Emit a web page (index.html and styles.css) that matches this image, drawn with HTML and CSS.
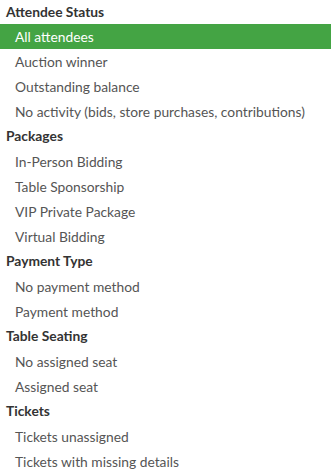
FILE: index.html
```html
<!DOCTYPE html>
<html>
<head>
    <meta charset="UTF-8">
    <title>Filters</title>
    <link rel="stylesheet" href="styles.css">
</head>
<body>
    <div class="filter-menu">
        <div class="group-title">Attendee Status</div>
        <div class="item active">All attendees</div>
        <div class="item">Auction winner</div>
        <div class="item">Outstanding balance</div>
        <div class="item">No activity (bids, store purchases, contributions)</div>

        <div class="group-title">Packages</div>
        <div class="item">In-Person Bidding</div>
        <div class="item">Table Sponsorship</div>
        <div class="item">VIP Private Package</div>
        <div class="item">Virtual Bidding</div>

        <div class="group-title">Payment Type</div>
        <div class="item">No payment method</div>
        <div class="item">Payment method</div>

        <div class="group-title">Table Seating</div>
        <div class="item">No assigned seat</div>
        <div class="item">Assigned seat</div>

        <div class="group-title">Tickets</div>
        <div class="item">Tickets unassigned</div>
        <div class="item">Tickets with missing details</div>
    </div>
</body>
</html>
```

FILE: styles.css
```css
body {
    margin: 0;
    background-color: #fff;
    font-family: "Lato", "Open Sans", sans-serif;
    font-size: 13.8px;
}

.filter-menu {
    width: 331px;
}

.group-title {
    height: 25px;
    line-height: 23px;
    padding-left: 6px;
    font-weight: bold;
    color: #333;
}

.filter-menu > .group-title:first-child {
    height: 24px;
}

.item {
    height: 25px;
    line-height: 25px;
    padding-left: 15px;
    color: #555;
    white-space: nowrap;
    cursor: pointer;
}

.item.active {
    background-color: #44a444;
    color: #fff;
}
```
